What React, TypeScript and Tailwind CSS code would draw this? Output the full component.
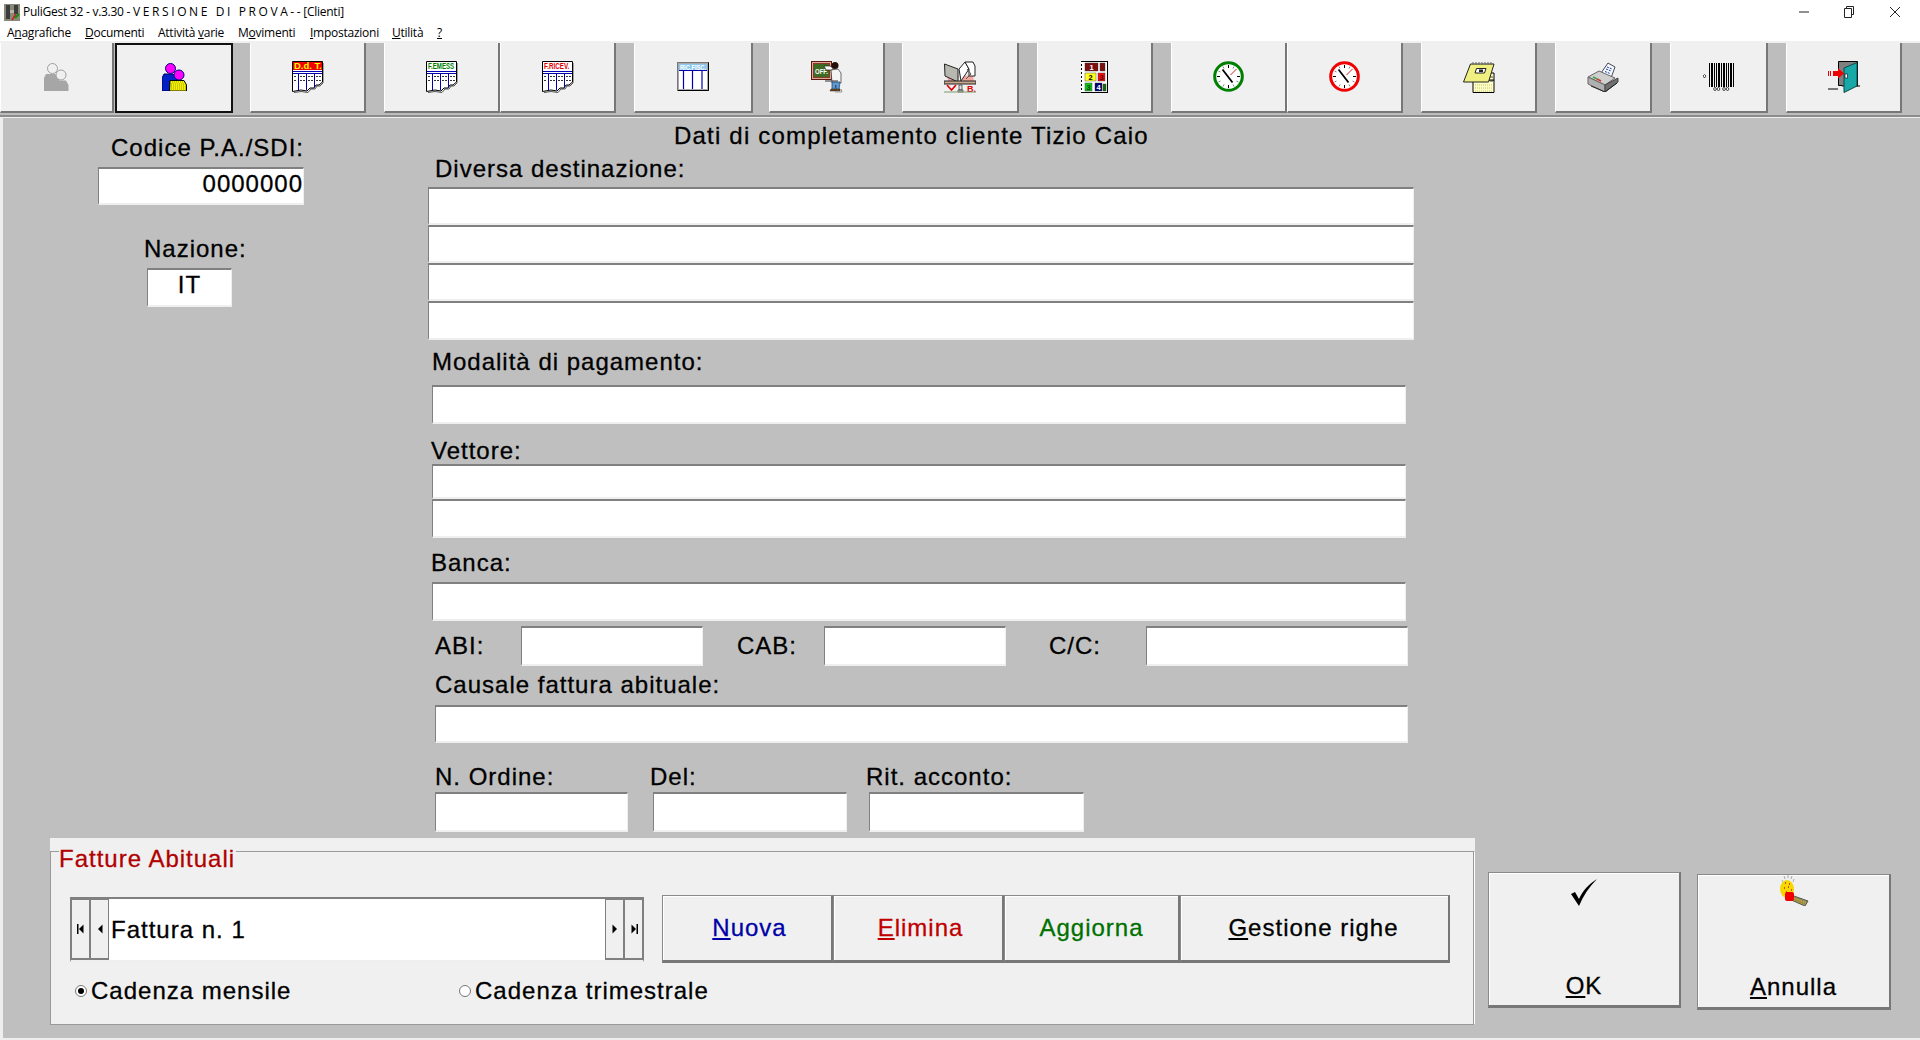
import type { ReactNode } from "react";

const inputCls =
  "bg-white border-t-2 border-l border-b-2 border-r border-t-[#808080] border-l-[#808080] border-b-[#efefef] border-r-[#efefef]";
const raisedCls =
  "bg-[#f0f0f0] border border-[#8a8a8a] border-r-2 border-b-[3px] border-r-[#777777] border-b-[#777777] shadow-[inset_1px_1px_0_#ffffff]";
const labelCls = "h-[26px] leading-[26px] whitespace-nowrap";

function DocIcon({ band, color, label, sx }: { band: string; color: string; label: string; sx: number }) {
  const outline = "M.5 .5H30.5V21L27 24L24 24L22 27L18 27L15 30L9 29L.5 30.5Z";
  return (
    <svg width="32" height="32" viewBox="0 0 32 32">
      <path d="M31 2V22L28 25L25 25L23 28L19 28L16 31.5L9 30.5L2 31.5" fill="none" stroke="#555" />
      <path d={outline} fill="#fff" stroke="#000" />
      <rect x="1" y="1" width="29" height="8" fill={band} />
      <text transform={`translate(2 8) scale(${sx} 1)`} fontSize="9" fontWeight="700" fill={color} fontFamily="Liberation Sans, sans-serif">
        {label}
      </text>
      <path d="M1 10H30M1 12H30" stroke="#0000b0" shapeRendering="crispEdges" />
      <path d="M6.500 12V29M14.500 12V29M22.500 12V26" stroke="#0000b0" shapeRendering="crispEdges" />
      <path d="M2 15H5M8 15H13M16 15H21M24 15H29M2 19H5M8 19H13M16 19H21M24 19H29" stroke="#333" strokeDasharray="2 1" shapeRendering="crispEdges" />
    </svg>
  );
}

function People({ gray }: { gray?: boolean }) {
  const head = gray ? "#f0f0f0" : "#ff00ff";
  const line = gray ? "#a0a0a0" : "#000080";
  return (
    <svg width="25" height="28" viewBox="0 0 25 28">
      <path d="M2 11H11L15 15V28H0V15Z" fill={gray ? "#a6a6a6" : "#0020c8"} stroke={gray ? "none" : "#000060"} />
      <path d="M8 17.500H22L24.500 22V28H7.500Z" fill={gray ? "#a6a6a6" : "#f4f000"} stroke={gray ? "none" : "#000"} />
      {!gray && <path d="M10 19H22M9 21H23M9 23H24M9 25H24M9 27H24" stroke="#a0a000" strokeDasharray="1 1" />}
      <circle cx="8.500" cy="5.500" r="5" fill={head} stroke={line} />
      <circle cx="17" cy="12" r="5" fill={head} stroke={line} />
    </svg>
  );
}

function Clock({ color }: { color: string }) {
  return (
    <svg width="32" height="32" viewBox="0 0 32 32">
      <circle cx="15.500" cy="15.500" r="13.800" fill="#fff" stroke={color} strokeWidth="3" />
      <path d="M15.500 4V7M15.500 24V27M4 15.500H7M24 15.500H27" stroke="#000" />
      <path d="M10 5.500L11 7.500M21 5.500L20 7.500M5.500 10L7.500 11M25.500 21L23.500 20M5.500 21L7.500 20M10 25.500L11 23.500M21 25.500L20 23.500" stroke="#888" />
      <path d="M9.500 8.500L19.500 21.500" stroke="#000" strokeWidth="1.800" />
      <path d="M17.500 14L23.500 8" stroke="#d02020" />
    </svg>
  );
}

function RicFisc() {
  return (
    <svg width="32" height="29" viewBox="0 0 32 29">
      <rect x=".5" y=".5" width="31" height="28" fill="#a8a8a8" stroke="#777" />
      <path d="M31.500 .5V28.500H1" fill="none" stroke="#000" />
      <rect x="2" y="2" width="28" height="25" fill="#fff" />
      <rect x="2" y="2" width="28" height="6" fill="#8cc8f0" />
      <text x="3" y="7.600" fontSize="6.500" fontWeight="700" fill="#fff" fontFamily="Liberation Sans, sans-serif" textLength="26" lengthAdjust="spacingAndGlyphs">
        RIC.FISC.
      </text>
      <path d="M2 8.500H30" stroke="#0000b0" />
      <path d="M6.500 9V27M15.500 9V27M25 9V27" stroke="#0000b0" strokeWidth="1.200" />
    </svg>
  );
}

function Teacher() {
  return (
    <svg width="32" height="32" viewBox="0 0 32 32">
      <rect x=".5" y=".5" width="20" height="18" fill="#e0a898" stroke="#5a1a10" />
      <rect x="2" y="2" width="17" height="15" fill="#8b3a2a" />
      <rect x="3" y="3" width="15" height="13" fill="#3e6b22" />
      <text x="4" y="13" fontSize="8" fontWeight="700" fill="#fff" fontFamily="Liberation Sans, sans-serif" textLength="13" lengthAdjust="spacingAndGlyphs">
        OFF.
      </text>
      <path d="M13 5H19L22 7V9H15Z" fill="#fff" stroke="#222" strokeWidth=".7" />
      <circle cx="24" cy="4.500" r="3.500" fill="#241008" />
      <path d="M20 9L27 8L30 12V22H21Z" fill="#f4f4f4" stroke="#333" strokeWidth=".7" />
      <path d="M21 21H29L28 29H25L24.800 24L24 29H21Z" fill="#5c9ad0" stroke="#1c3a70" strokeWidth=".7" />
      <path d="M19 30H24V28H20ZM24 30H29V28H25Z" fill="#7a4a10" stroke="#222" strokeWidth=".5" />
      <path d="M30 28L31 31H24" stroke="#999" fill="none" />
      <path d="M14 20H27" stroke="#333" />
    </svg>
  );
}

function Books() {
  return (
    <svg width="32" height="32" viewBox="0 0 32 32">
      <path d="M3 14L4 21H13L15 15Z M18 15L19 21H30L29 14Z" fill="#f2a8a0" />
      <path d="M.5 3L14 8V21L1 15Z" fill="#b8b8b0" stroke="#222" />
      <path d="M15 8L21 1L25 8L17 20Z" fill="#fff" stroke="#222" />
      <path d="M21 1H29L31 5V15H25L25 8Z" fill="#fff" stroke="#222" />
      <path d="M23 8L27 13L22 18" fill="none" stroke="#555" />
      <path d="M0 20H32V23H0Z" fill="#c8a890" stroke="#222" />
      <path d="M3 24L7.500 29L12 24" fill="none" stroke="#e00000" strokeWidth="1.600" />
      <text x="23" y="30.500" fontSize="9" fontWeight="700" fill="#e00000" fontFamily="Liberation Sans, sans-serif">B.</text>
      <path d="M15 24H18V29H15ZM14 29H19V31H14Z" fill="#ddd" stroke="#333" strokeWidth=".7" />
      <path d="M0 31H32" stroke="#7a9a70" />
    </svg>
  );
}

function Numbers() {
  const cell = (x: number, y: number, w: number, h: number, f: string, t?: string, c?: string) => (
    <g key={`${x}-${y}`}>
      <rect x={x} y={y} width={w} height={h} fill={f} stroke="#333" strokeWidth=".4" />
      {t && (
        <text x={x + w / 2} y={y + h - 1.500} textAnchor="middle" fontSize="7.500" fontWeight="700" fill={c} fontFamily="Liberation Sans, sans-serif">
          {t}
        </text>
      )}
    </g>
  );
  return (
    <svg width="27" height="32" viewBox="0 0 27 32">
      <rect x=".5" y=".5" width="26" height="31" fill="#fff" stroke="#000" />
      <path d="M.5 1V31" stroke="#fff" strokeDasharray="2 2" />
      {cell(4, 2, 13, 8, "#7c1010", "1", "#fff")}
      {cell(19, 2, 5, 8, "#7c1010")}
      {cell(4, 12, 11, 8, "#ffff20", "2", "#000")}
      {cell(17, 12, 7, 8, "#f01010", "3", "#600")}
      {cell(4, 22, 7, 8, "#10c820", "3", "#004000")}
      {cell(14, 22, 7, 8, "#000070", "4", "#fff")}
      {cell(22, 23, 3, 7, "#107010")}
    </svg>
  );
}

function Notepad() {
  return (
    <svg width="32" height="32" viewBox="0 0 32 32">
      <path d="M10 19H31V31.500H10Z" fill="#fdfdc8" stroke="#000" />
      <path d="M12 24H29M12 27H29M12 30H29" stroke="#c8c860" strokeDasharray="1 1" />
      <path d="M25 12H31V19H25Z" fill="#fdfdc8" stroke="#000" />
      <path d="M27 16H30M27 20H30" stroke="#444" />
      <path d="M7.500 3H31L25.500 21H.5Z" fill="#f0f080" stroke="#222" />
      <path d="M10 1V4M13 1V4M16 1V4M19 1V4M22 1V4M25 1V4M28 1V4" stroke="#666" />
      <path d="M13.500 7.500H23L21.500 12H12Z" fill="#fff" stroke="#222" />
      <rect x="16" y="8.500" width="4" height="2.500" fill="#222" />
    </svg>
  );
}

function Printer() {
  return (
    <svg width="32" height="30" viewBox="0 0 32 30">
      <path d="M14 11L21 1L28 5L24 16Z" fill="#f4f8ff" stroke="#445" />
      <path d="M19 7L24 9M18 9.500L23 11.500M20 5L25 7" stroke="#2040a0" strokeDasharray="2 1" />
      <path d="M1 15L12 9L28 16L18 23Z" fill="#cfcfcf" stroke="#666" />
      <path d="M1 15L18 23V30L1 22Z" fill="#b0b0b0" stroke="#666" />
      <path d="M18 23L31 16V20L18 30Z" fill="#707070" stroke="#444" />
      <path d="M6 15L10 17" stroke="#40a040" strokeWidth="1.400" />
      <path d="M10 17L14 19" stroke="#d03030" strokeWidth="1.400" />
      <path d="M4 24L18 30L30 21" fill="none" stroke="#222" />
    </svg>
  );
}

function Barcode() {
  const bars: [number, number][] = [[6, 1], [8, 2], [11, 1], [13, 1], [15, 2], [18, 1], [20, 2], [23, 1], [25, 1], [27, 2], [30, 1]];
  return (
    <svg width="32" height="28" viewBox="0 0 32 28">
      {bars.map(([x, w]) => (
        <rect key={x} x={x} y="0" width={w} height="24" fill="#000" />
      ))}
      <path d="M1.500 11.500L3 13L1.500 15L0 13Z" fill="#fff" stroke="#000" strokeWidth=".7" />
      <g fill="#fff" stroke="#000" strokeWidth=".7">
        <ellipse cx="12" cy="26" rx="1.300" ry="1.500" />
        <ellipse cx="15.500" cy="26" rx="1.300" ry="1.500" />
        <ellipse cx="21" cy="26" rx="1.300" ry="1.500" />
        <ellipse cx="24.500" cy="26" rx="1.300" ry="1.500" />
      </g>
    </svg>
  );
}

function Door() {
  return (
    <svg width="32" height="32" viewBox="0 0 32 32">
      <path d="M10.500 .5H29.500V25H14V24.500H10.500Z" fill="#808080" stroke="#000" />
      <path d="M16 7L29 1.500V25L16 31.500Z" fill="#18a8a8" stroke="#0a4a4a" />
      <rect x="17" y="13" width="2.500" height="4" fill="#fff" stroke="#000" strokeWidth=".6" />
      <path d="M0 28H10M29 25H32" stroke="#000" />
      <path d="M5 10H10V7L16 12.500L10 17.500V15H5Z" fill="#f00000" />
      <path d="M.5 10V15M2.500 10V15" stroke="#f00000" />
    </svg>
  );
}

function AppIcon() {
  return (
    <svg width="16" height="17" viewBox="0 0 16 17">
      <rect x="0" y="0" width="16" height="17" fill="#8a8a7a" />
      <rect x="2" y="1" width="4" height="14" fill="#3c3c3c" />
      <rect x="10" y="1" width="4" height="9" fill="#3c3c3c" />
      <rect x="6" y="6" width="4" height="3" fill="#b8b8a8" />
      <path d="M8 16L12 10" stroke="#d02020" strokeWidth="1.500" />
      <path d="M11 14L15 10" stroke="#109010" strokeWidth="2" />
    </svg>
  );
}

function Match() {
  return (
    <svg width="30" height="31" viewBox="0 0 30 31">
      <path d="M5 1L6 4M9 0V3M13 1L12 4M3 5L4 7M15 4L14 7" stroke="#aaa" />
      <ellipse cx="8" cy="14" rx="7" ry="9" fill="#f4d800" />
      <path d="M6 8H7M10 9H11M5 13H6M9 12H10M12 15H13M7 17H8" stroke="#d02010" strokeWidth="1.400" />
      <path d="M12 20L29 26L26 31L10 24Z" fill="#b0a040" stroke="#555" />
      <path d="M16 22L28 27M14 24L26 29" stroke="#666" strokeDasharray="1 1" />
      <rect x="6" y="17" width="9" height="9" rx="2" fill="#f00000" />
    </svg>
  );
}

const tools: { w: number; gap: number; icon: ReactNode; active?: boolean }[] = [
  { w: 114, gap: 1, icon: <People gray /> },
  { w: 118, gap: 17, icon: <People />, active: true },
  { w: 116, gap: 18, icon: <DocIcon band="#f00000" color="#ffff00" label="D.d. T." sx={1.05} /> },
  { w: 116, gap: 0, icon: <DocIcon band="#ffffff" color="#008000" label="F.EMESS" sx={0.68} /> },
  { w: 116, gap: 18, icon: <DocIcon band="#ffffff" color="#e00000" label="F.RICEV." sx={0.7} /> },
  { w: 119, gap: 16, icon: <RicFisc /> },
  { w: 116, gap: 17, icon: <Teacher /> },
  { w: 117, gap: 18, icon: <Books /> },
  { w: 116, gap: 18, icon: <Numbers /> },
  { w: 116, gap: 0, icon: <Clock color="#008000" /> },
  { w: 116, gap: 18, icon: <Clock color="#f00000" /> },
  { w: 116, gap: 18, icon: <Notepad /> },
  { w: 97, gap: 18, icon: <Printer /> },
  { w: 98, gap: 18, icon: <Barcode /> },
  { w: 116, gap: 0, icon: <Door /> },
];

function Toolbar() {
  return (
    <div className="flex h-[74px] bg-[#bdbdbd] border-t-2 border-t-[#f0f0f0]">
      {tools.map((t, i) => (
        <div key={i} className="flex h-[70px]" style={{ width: t.w + t.gap }}>
          <button
            className={
              t.active
                ? "flex h-full items-center justify-center bg-[#f0f0f0] border-2 border-[#111111] pb-[2px]"
                : "flex h-full items-center justify-center bg-[#f0f0f0] border-l border-l-white border-r-2 border-b-2 border-r-[#777777] border-b-[#777777] pb-[1px]"
            }
            style={{ width: t.w }}
          >
            {t.icon}
          </button>
        </div>
      ))}
    </div>
  );
}

function NavButton({ dir, bar }: { dir: "l" | "r"; bar?: boolean }) {
  return (
    <button className="flex h-full w-[19px] items-center justify-center bg-[#f0f0f0] border border-[#808080] border-b-2">
      <svg width="8" height="12" viewBox="0 0 8 12">
        {dir === "l" ? <path d="M6.500 1.500V10.500L2 6Z" fill="#000" /> : <path d="M1.500 1.500V10.500L6 6Z" fill="#000" />}
        {bar && <rect x={dir === "l" ? 0 : 6.5} y="1" width="1.500" height="10" fill="#000" />}
      </svg>
    </button>
  );
}

function Radio({ checked }: { checked?: boolean }) {
  return (
    <span className="flex h-[12px] w-[12px] items-center justify-center rounded-full border border-[#777777] bg-white">
      {checked && <span className="h-[6px] w-[6px] rounded-full bg-black" />}
    </span>
  );
}

function ActionButton({ w, color, u, rest, extra = "" }: { w: number; color: string; u: string; rest: string; extra?: string }) {
  return (
    <button className={`h-full ${raisedCls} ${extra}`} style={{ width: w, color }}>
      <u>{u}</u>
      {rest}
    </button>
  );
}

export default function App() {
  return (
    <div className="h-[1040px] w-[1920px] overflow-hidden bg-white text-black font-['Liberation_Sans',Arial,sans-serif]">
      {/* title bar */}
      <div className="flex h-[24px] items-center pl-[4px] font-['Open_Sans',sans-serif] text-[12px] tracking-[-0.26px]">
        <AppIcon />
        <span className="ml-[3px] whitespace-pre">PuliGest 32 - v.3.30 - V E R S I O N E   D I   P R O V A - - [Clienti]</span>
        <div className="ml-auto flex items-center">
          <svg width="12" height="12" viewBox="0 0 12 12" className="mr-[33px]">
            <path d="M1 6H11" stroke="#222" />
          </svg>
          <svg width="12" height="12" viewBox="0 0 12 12" className="mr-[34px]">
            <path d="M3.500 2.500V.5H10.500V8.500H8.500M1.500 2.500H8.500V11.500H1.500Z" fill="none" stroke="#222" />
          </svg>
          <svg width="12" height="12" viewBox="0 0 12 12" className="mr-[19px]">
            <path d="M1 1L11 11M11 1L1 11" stroke="#222" />
          </svg>
        </div>
      </div>

      {/* menu */}
      <div className="flex h-[17px] items-center pl-[7px] font-['Open_Sans',sans-serif] text-[12px] tracking-[-0.25px]">
        <span className="w-[78px]">A<u>n</u>agrafiche</span>
        <span className="w-[73px]"><u>D</u>ocumenti</span>
        <span className="w-[80px]">Attività <u>v</u>arie</span>
        <span className="w-[72px]">M<u>o</u>vimenti</span>
        <span className="w-[82px]"><u>I</u>mpostazioni</span>
        <span className="w-[45px]"><u>U</u>tilità</span>
        <span><u>?</u></span>
      </div>

      <Toolbar />

      {/* main panel */}
      <div className="h-[925px] bg-[#bfbfbf] border-t-2 border-t-[#8c8c8c] shadow-[inset_3px_1px_0_#eeeeee,inset_0_-2px_0_#eeeeee] text-[24px] tracking-[1px] [-webkit-text-stroke-width:0.3px]">
        <div className="flex">
          {/* left column */}
          <div className="w-[428px] shrink-0">
            <div className={`ml-[98px] mt-[18px] w-[206px] text-right ${labelCls}`}>Codice P.A./SDI:</div>
            <div className={`ml-[98px] mt-[6px] flex h-[38px] w-[206px] items-center justify-end pb-[4px] ${inputCls}`}>0000000</div>
            <div className={`ml-[144px] mt-[31px] ${labelCls}`}>Nazione:</div>
            <div className={`ml-[147px] mt-[6px] flex h-[39px] w-[85px] items-center justify-center pb-[6px] ${inputCls}`}>IT</div>
          </div>

          {/* form column */}
          <div className="w-[986px] shrink-0">
            <div className={`ml-[246px] mt-[6px] tracking-[1.2px] ${labelCls}`}>Dati di completamento cliente Tizio Caio</div>
            <div className={`ml-[7px] mt-[7px] ${labelCls}`}>Diversa destinazione:</div>
            <div className="mt-[5px] flex flex-col">
              <div className={`h-[38px] ${inputCls} border-b-0`} />
              <div className={`h-[38px] ${inputCls} border-b-0`} />
              <div className={`h-[38px] ${inputCls} border-b-0`} />
              <div className={`h-[39px] ${inputCls}`} />
            </div>
            <div className={`ml-[4px] mt-[9px] ${labelCls}`}>Modalità di pagamento:</div>
            <div className={`ml-[4px] mt-[10px] h-[39px] w-[974px] ${inputCls}`} />
            <div className={`ml-[3px] mt-[14px] ${labelCls}`}>Vettore:</div>
            <div className="ml-[4px] flex w-[974px] flex-col">
              <div className={`h-[35px] ${inputCls} border-b-0`} />
              <div className={`h-[39px] ${inputCls}`} />
            </div>
            <div className={`ml-[3px] mt-[12px] ${labelCls}`}>Banca:</div>
            <div className={`ml-[4px] mt-[6px] h-[39px] w-[974px] ${inputCls}`} />

            <div className="ml-[7px] mt-[5px] flex h-[40px] items-center">
              <span className="w-[86px] pb-[1px]">ABI:</span>
              <div className={`h-full w-[182px] ${inputCls}`} />
              <span className="ml-[34px] w-[87px] pb-[1px]">CAB:</span>
              <div className={`h-full w-[182px] ${inputCls}`} />
              <span className="ml-[43px] w-[97px] pb-[1px]">C/C:</span>
              <div className={`h-full w-[262px] ${inputCls}`} />
            </div>

            <div className={`ml-[7px] mt-[6px] ${labelCls}`}>Causale fattura abituale:</div>
            <div className={`ml-[7px] mt-[7px] h-[38px] w-[973px] ${inputCls}`} />

            <div className="ml-[7px] mt-[21px] flex">
              <div className="w-[193px]">
                <div className={labelCls}>N. Ordine:</div>
                <div className={`mt-[2px] h-[40px] ${inputCls}`} />
              </div>
              <div className="ml-[25px] w-[194px]">
                <div className={`-ml-[3px] ${labelCls}`}>Del:</div>
                <div className={`mt-[2px] h-[40px] ${inputCls}`} />
              </div>
              <div className="ml-[22px] w-[215px]">
                <div className={`-ml-[3px] ${labelCls}`}>Rit. acconto:</div>
                <div className={`mt-[2px] h-[40px] ${inputCls}`} />
              </div>
            </div>
          </div>
        </div>

        {/* bottom row */}
        <div className="ml-[50px] mt-[6px] flex items-start">
          <div className="h-[187px] w-[1425px] bg-[#f0f0f0] pt-[13px]">
            <div className="relative h-[174px] border border-[#9a9a9a] border-r-white pl-[19px] pt-[43px] shadow-[inset_-1px_0_0_#9a9a9a]">
              <span className={`absolute left-[8px] -top-[6px] bg-[#f0f0f0] pr-[1px] text-[#b00000] ${labelCls}`}>Fatture Abituali</span>

              <div className="flex h-[68px] items-center">
                <div className="flex h-[65px] w-[574px] bg-white border border-[#808080] border-b-2 border-b-[#efefef] border-t-2">
                  <NavButton dir="l" bar />
                  <NavButton dir="l" />
                  <span className="flex flex-1 items-center pl-[2px] pt-[2px]">Fattura n. 1</span>
                  <NavButton dir="r" />
                  <NavButton dir="r" bar />
                </div>
                <div className="ml-[18px] flex h-full">
                  <ActionButton w={171} color="#0000a8" u="N" rest="uova" extra="pl-[5px]" />
                  <ActionButton w={171} color="#c00000" u="E" rest="limina" extra="pl-[5px]" />
                  <ActionButton w={176} color="#007000" u="" rest="Aggiorna" />
                  <ActionButton w={270} color="#000000" u="G" rest="estione righe" extra="pr-[2px]" />
                </div>
              </div>

              <div className="ml-[5px] mt-[15px] flex h-[26px] items-center">
                <Radio checked />
                <span className="ml-[4px] w-[368px] leading-[26px]">Cadenza mensile</span>
                <Radio />
                <span className="ml-[4px] leading-[26px]">Cadenza trimestrale</span>
              </div>
            </div>
          </div>

          <button className={`relative ml-[13px] mt-[34px] flex h-[136px] w-[193px] flex-col items-center ${raisedCls}`}>
            <svg width="26" height="27" viewBox="0 0 26 27" className="mt-[6px]">
              <path d="M0 15L4 13L8 20C12 11 18 5 26 0C18 8 12 17 8 27Z" fill="#000" />
            </svg>
            <span className="mt-[67px] leading-[26px]"><u>O</u>K</span>
          </button>
          <button className={`relative ml-[16px] mt-[36px] flex h-[136px] w-[194px] flex-col items-center ${raisedCls}`}>
            <Match />
            <span className="mt-[68px] leading-[26px]"><u>A</u>nnulla</span>
          </button>
        </div>
      </div>
    </div>
  );
}
